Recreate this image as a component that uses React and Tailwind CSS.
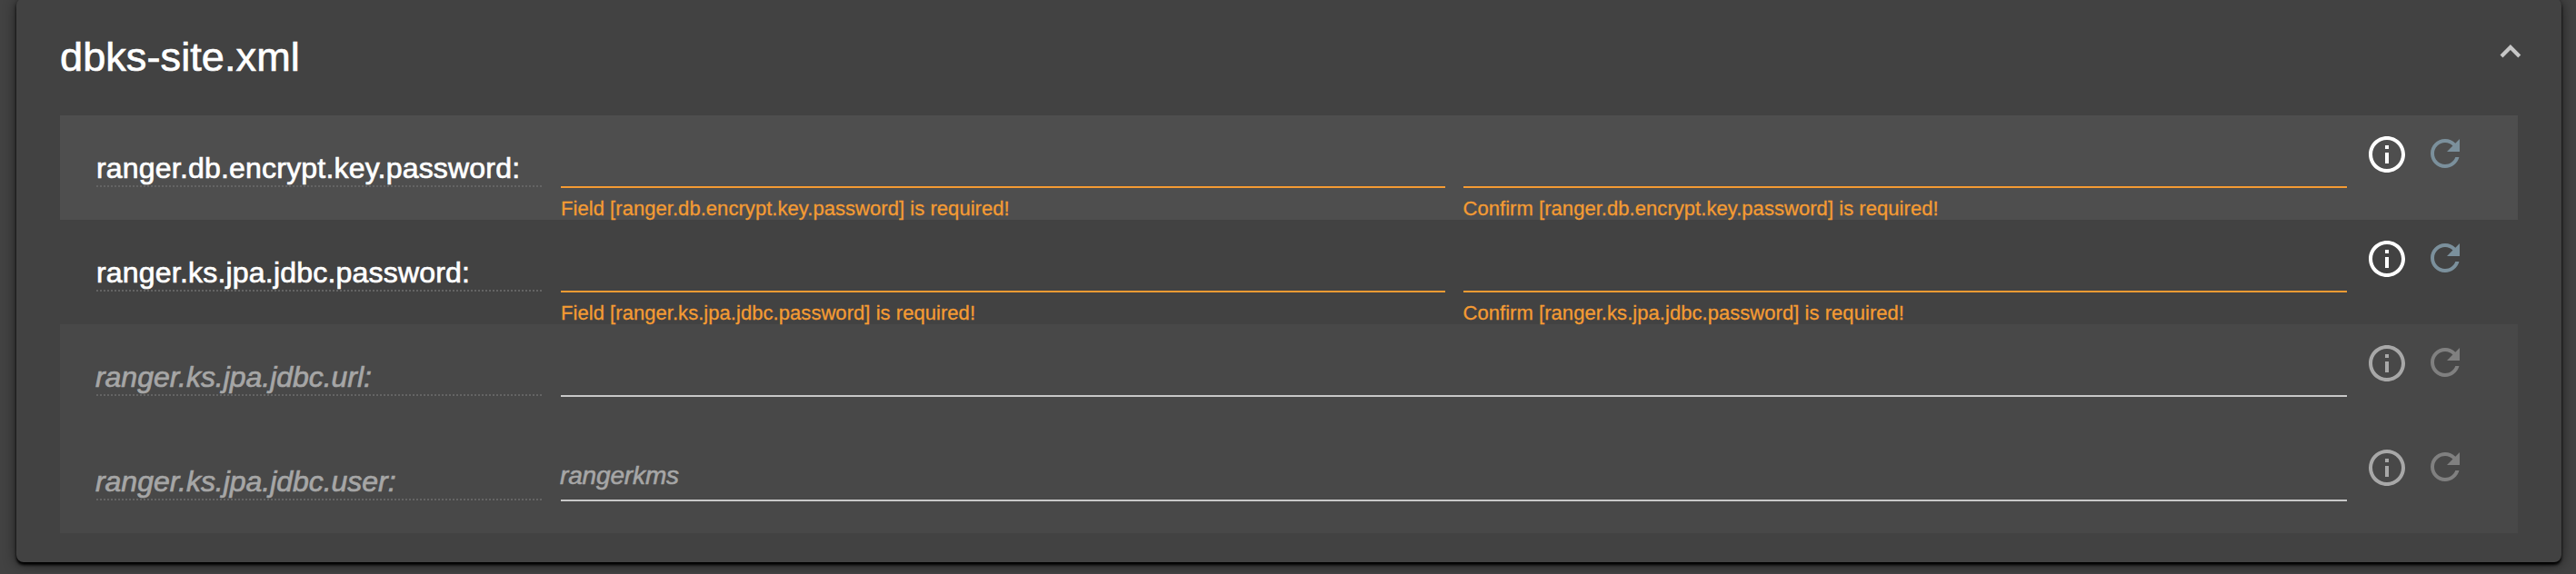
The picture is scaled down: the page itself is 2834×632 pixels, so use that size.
const rows = [
  {
    name: "ranger.db.encrypt.key.password",
    required: true,
    bg: "bg-[#4e4e4e]",
    label: "tracking-[0.2px]",
  },
  {
    name: "ranger.ks.jpa.jdbc.password",
    required: true,
    bg: "bg-[#424242]",
    label: "tracking-[0.2px]",
  },
  { name: "ranger.ks.jpa.jdbc.url", value: "", bg: "bg-[#484848]", label: "-ml-px tracking-[-0.04px]" },
  { name: "ranger.ks.jpa.jdbc.user", value: "rangerkms", bg: "bg-[#484848]", label: "-ml-px tracking-[-0.04px]" },
];

function InfoIcon({ className }) {
  return (
    <svg viewBox="0 0 24 24" className={`size-12 ${className}`} fill="currentColor">
      <path d="M11 7h2v2h-2zm0 4h2v6h-2zm1-9C6.48 2 2 6.48 2 12s4.48 10 10 10 10-4.48 10-10S17.52 2 12 2zm0 18c-4.41 0-8-3.59-8-8s3.59-8 8-8 8 3.59 8 8-3.59 8-8 8z" />
    </svg>
  );
}

function RefreshIcon({ className }) {
  return (
    <svg viewBox="0 0 24 24" className={`size-12 ${className}`} fill="currentColor">
      <path d="M17.65 6.35C16.2 4.9 14.21 4 12 4c-4.42 0-7.99 3.58-7.99 8s3.57 8 7.99 8c3.73 0 6.84-2.55 7.73-6h-2.08c-.82 2.33-3.04 4-5.65 4-3.31 0-6-2.69-6-6s2.69-6 6-6c1.66 0 3.14.69 4.22 1.78L13 11h7V4l-2.35 2.35z" />
    </svg>
  );
}

function Field({ message }) {
  return (
    <div className="w-full min-w-0">
      <div className="h-[80px] border-b-2 border-[#f49b33]" />
      <div className="pt-[7px] text-[22px] leading-[31px] tracking-[0.05px] whitespace-nowrap text-[#f49b33] [-webkit-text-stroke:0.3px_currentColor]">
        {message}
      </div>
    </div>
  );
}

function Row({ row }) {
  const tone = row.required ? "text-white" : "italic text-[#a6a6a6]";
  return (
    <div className={`flex h-[115px] pl-[40px] ${row.bg}`}>
      <div className="w-[491px] shrink-0">
        <div
          className={`h-[77px] pt-[38px] text-[32px] leading-[40px] whitespace-nowrap [-webkit-text-stroke:0.7px_currentColor] ${tone} ${row.label}`}
        >
          {row.name}:
        </div>
        <svg className="block h-[2px] w-[491px]" viewBox="0 0 491 2">
          <path d="M0 1H491" stroke="#646464" strokeWidth="2" strokeDasharray="2 2" />
        </svg>
      </div>
      <div className="ml-[20px] flex w-[1965px] shrink-0 gap-[20px]">
        {row.required ? (
          <>
            <Field message={`Field [${row.name}] is required!`} />
            <Field message={`Confirm [${row.name}] is required!`} />
          </>
        ) : (
          <div className="h-[80px] w-full border-b-2 border-[#c8c8c8] pt-[36px] text-[28px] leading-[32px] tracking-[-0.15px] text-[#a6a6a6] italic [-webkit-text-stroke:0.6px_currentColor]">
            <span className="-ml-px">{row.value}</span>
          </div>
        )}
      </div>
      <div className="ml-[20px] flex gap-[16px] pt-[18px]">
        <InfoIcon className={row.required ? "mt-px text-white" : "mt-px text-[#a8a8a8]"} />
        <RefreshIcon className={row.required ? "text-[#7b909c]" : "text-[#808080]"} />
      </div>
    </div>
  );
}

export default function App() {
  return (
    <div className="flex h-[632px] w-[2834px] flex-col overflow-hidden bg-[#424242] px-[18px] pr-[16px] font-['Liberation_Sans',Arial,sans-serif]">
      <section className="relative z-10 -mt-[2px] h-[621px] w-[2800px] shrink-0 rounded-[8px] bg-[#424242] px-[48px] shadow-[0_3px_3px_0_#000000,0_2px_14px_0_#00000099]">
        <header className="flex h-[129px] justify-between">
          <h2 className="pt-[39px] text-[45px] leading-[52px] tracking-[0.1px] text-white [-webkit-text-stroke:0.7px_currentColor]">
            dbks-site.xml
          </h2>
          <svg className="mt-[50.5px] mr-[-4px] block h-[16px] w-[24px]" viewBox="0 0 24 16">
            <path d="M2 12.9L11.9 3L21.8 12.9" fill="none" stroke="#c6c6c6" strokeWidth="4.2" />
          </svg>
        </header>
        <div>
          {rows.map((row) => (
            <Row key={row.name} row={row} />
          ))}
        </div>
      </section>
      <section className="relative z-20 mt-[12px] h-[200px] w-[2800px] shrink-0 rounded-[8px] bg-[#424242]" />
    </div>
  );
}
